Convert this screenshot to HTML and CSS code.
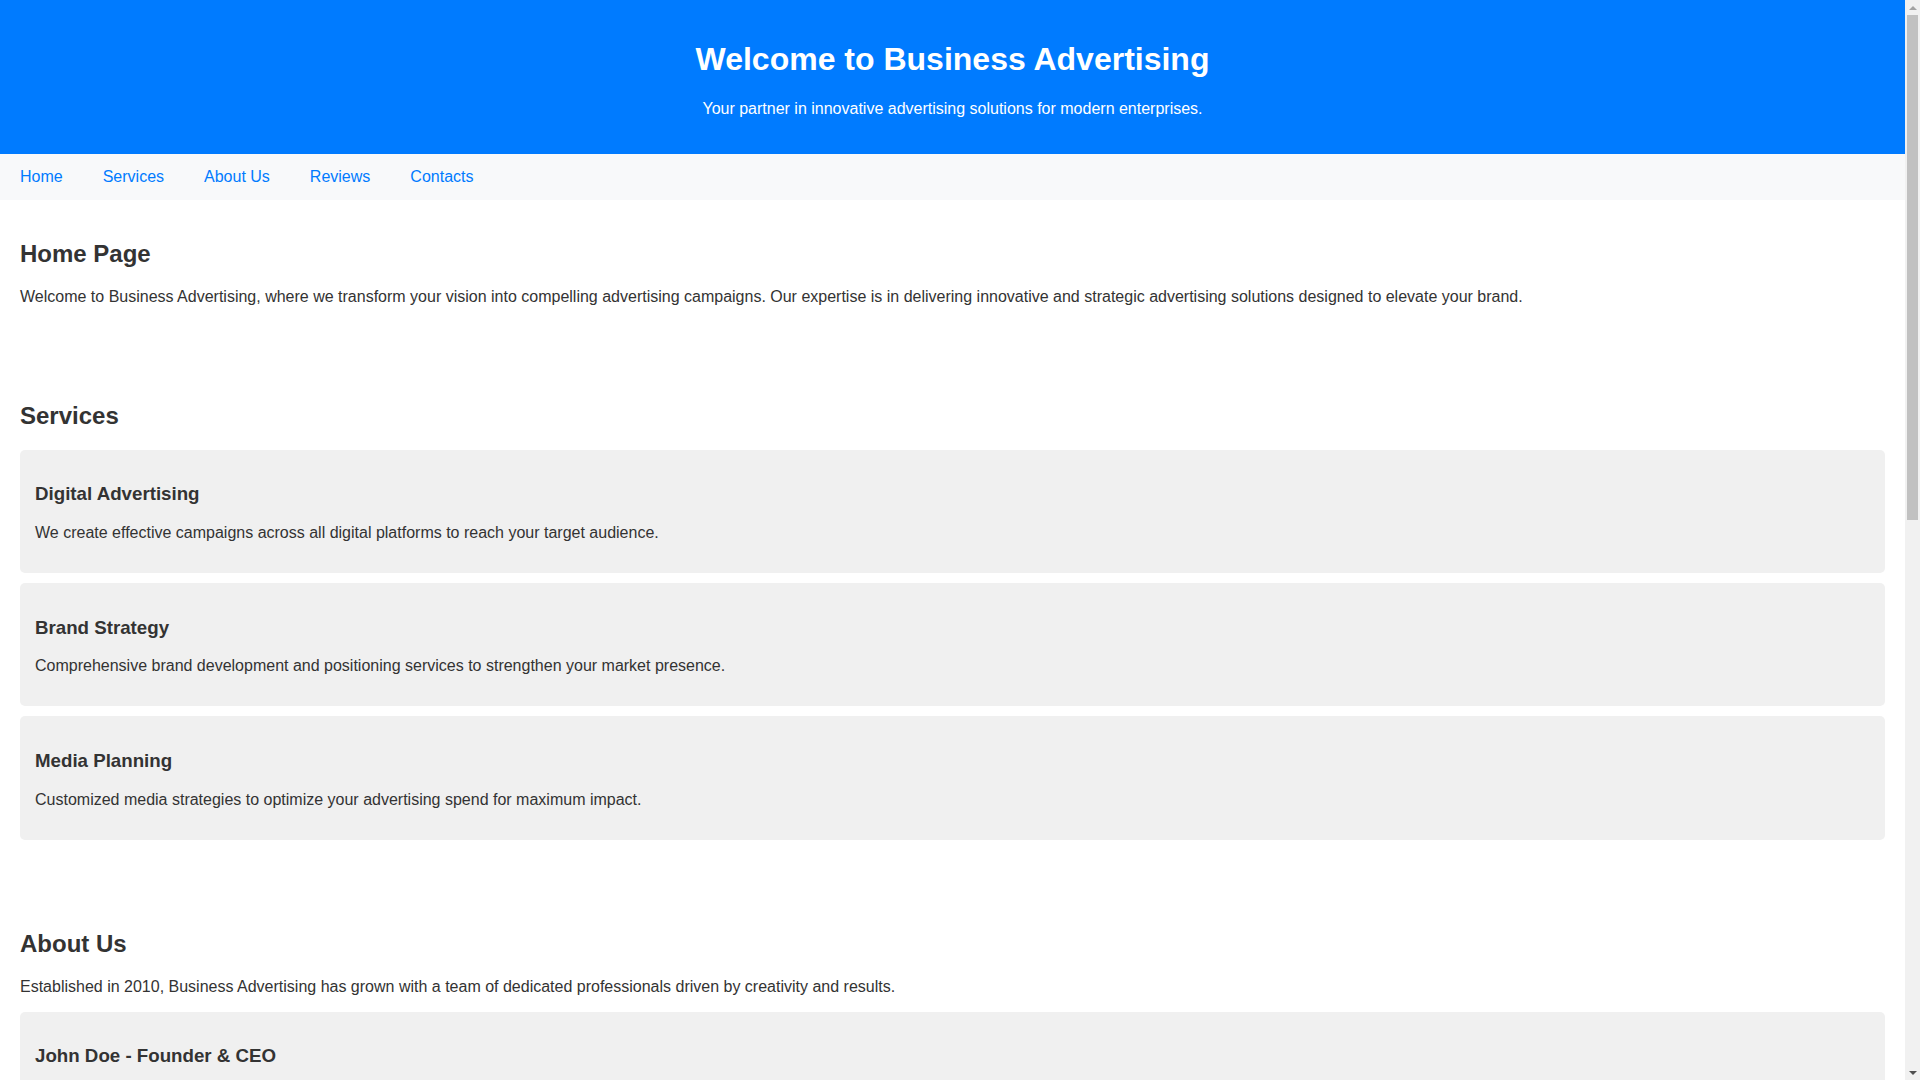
FILE: index.html
```html
<!DOCTYPE html>
<html lang="en">
<head>
<meta charset="utf-8">
<title>Business Advertising</title>
<link rel="stylesheet" href="styles.css">
</head>
<body>
<div class="page">
<header class="site-header">
  <h1>Welcome to Business Advertising</h1>
  <p>Your partner in innovative advertising solutions for modern enterprises.</p>
</header>
<nav class="site-nav">
  <a href="#home">Home</a>
  <a href="#services">Services</a>
  <a href="#about">About Us</a>
  <a href="#reviews">Reviews</a>
  <a href="#contacts">Contacts</a>
</nav>
<main>
  <section id="home" class="section">
    <h2>Home Page</h2>
    <p>Welcome to Business Advertising, where we transform your vision into compelling advertising campaigns. Our expertise is in delivering innovative and strategic advertising solutions designed to elevate your brand.</p>
  </section>
  <section id="services" class="section">
    <h2>Services</h2>
    <div class="card">
      <h3>Digital Advertising</h3>
      <p>We create effective campaigns across all digital platforms to reach your target audience.</p>
    </div>
    <div class="card">
      <h3>Brand Strategy</h3>
      <p>Comprehensive brand development and positioning services to strengthen your market presence.</p>
    </div>
    <div class="card">
      <h3>Media Planning</h3>
      <p>Customized media strategies to optimize your advertising spend for maximum impact.</p>
    </div>
  </section>
  <section id="about" class="section">
    <h2>About Us</h2>
    <p>Established in 2010, Business Advertising has grown with a team of dedicated professionals driven by creativity and results.</p>
    <div class="card">
      <h3>John Doe - Founder &amp; CEO</h3>
      <p>With over 20 years of experience in advertising, John leads our team with vision and passion.</p>
    </div>
    <div class="card">
      <h3>Jane Smith - Creative Director</h3>
      <p>Jane brings bold ideas to life, crafting campaigns that capture attention and inspire action.</p>
    </div>
    <div class="card">
      <h3>Mike Johnson - Marketing Strategist</h3>
      <p>Mike turns data into insight, ensuring every campaign delivers measurable results.</p>
    </div>
  </section>
  <section id="reviews" class="section">
    <h2>Reviews</h2>
    <div class="card">
      <h3>Sarah L.</h3>
      <p>"Business Advertising transformed our brand. Our sales increased by 40% within six months!"</p>
    </div>
    <div class="card">
      <h3>Robert K.</h3>
      <p>"Professional, creative and always on time. Highly recommended for any business."</p>
    </div>
    <div class="card">
      <h3>Emily T.</h3>
      <p>"Their media planning saved us money while reaching more customers than ever before."</p>
    </div>
  </section>
  <section id="contacts" class="section">
    <h2>Contacts</h2>
    <p>Address: 123 Market Street, Suite 400, New York, NY 10001</p>
    <p>Phone: +1 (555) 123-4567</p>
    <p>Email: info@businessadvertising.com</p>
  </section>
</main>
<footer class="site-footer">
  <p>&copy; 2024 Business Advertising. All rights reserved.</p>
</footer>
</div>
<div class="scrollbar" aria-hidden="true">
  <div class="sb-arrow sb-up"></div>
  <div class="sb-thumb"></div>
  <div class="sb-spacer"></div>
  <div class="sb-arrow sb-down"></div>
</div>
</body>
</html>
```
FILE: styles.css
```css
html, body {
  margin: 0;
  padding: 0;
  height: 100%;
  overflow: hidden;
}
body {
  font-family: "Liberation Sans", Arial, Helvetica, sans-serif;
  font-size: 16px;
  color: #333;
  background: #fff;
  display: flex;
}
.page {
  flex: 1;
  min-width: 0;
  height: 100vh;
  overflow: hidden;
}
.scrollbar {
  width: 15px;
  flex: 0 0 15px;
  height: 100vh;
  background: #f1f1f1;
  display: flex;
  flex-direction: column;
  align-items: center;
}
.sb-arrow {
  width: 15px;
  height: 15px;
  flex: 0 0 15px;
  display: flex;
  align-items: center;
  justify-content: center;
}
.sb-arrow::before {
  content: "";
  width: 0;
  height: 0;
  border-left: 4px solid transparent;
  border-right: 4px solid transparent;
}
.sb-up::before {
  border-bottom: 4px solid #a3a3a3;
}
.sb-down::before {
  border-top: 4px solid #505050;
}
.sb-thumb {
  width: 11px;
  height: 505px;
  flex: 0 0 505px;
  background: #c1c1c1;
}
.sb-spacer {
  flex: 1;
}
.site-header {
  background: #007bff;
  color: #fff;
  text-align: center;
  padding: 20px;
}
.site-header h1 {
  font-size: 32px;
  margin: 21.44px 0;
}
.site-header p {
  margin: 16px 0;
}
.site-nav {
  background: #f8f9fa;
  display: flex;
  height: 46px;
  align-items: center;
}
.site-nav a {
  color: #007bff;
  text-decoration: none;
  padding: 0 20px;
}
.section {
  padding: 20px;
  margin-bottom: 20px;
}
.section h2 {
  font-size: 24px;
  margin: 19.92px 0;
}
.section p {
  margin: 16px 0;
}
.card {
  background: #f0f0f0;
  border-radius: 5px;
  padding: 15px;
  margin-bottom: 10px;
}
.card h3 {
  font-size: 18.72px;
  margin: 18.72px 0;
}
.site-footer {
  background: #007bff;
  color: #fff;
  text-align: center;
  padding: 10px;
}
.site-footer p {
  margin: 10px 0;
}
```
